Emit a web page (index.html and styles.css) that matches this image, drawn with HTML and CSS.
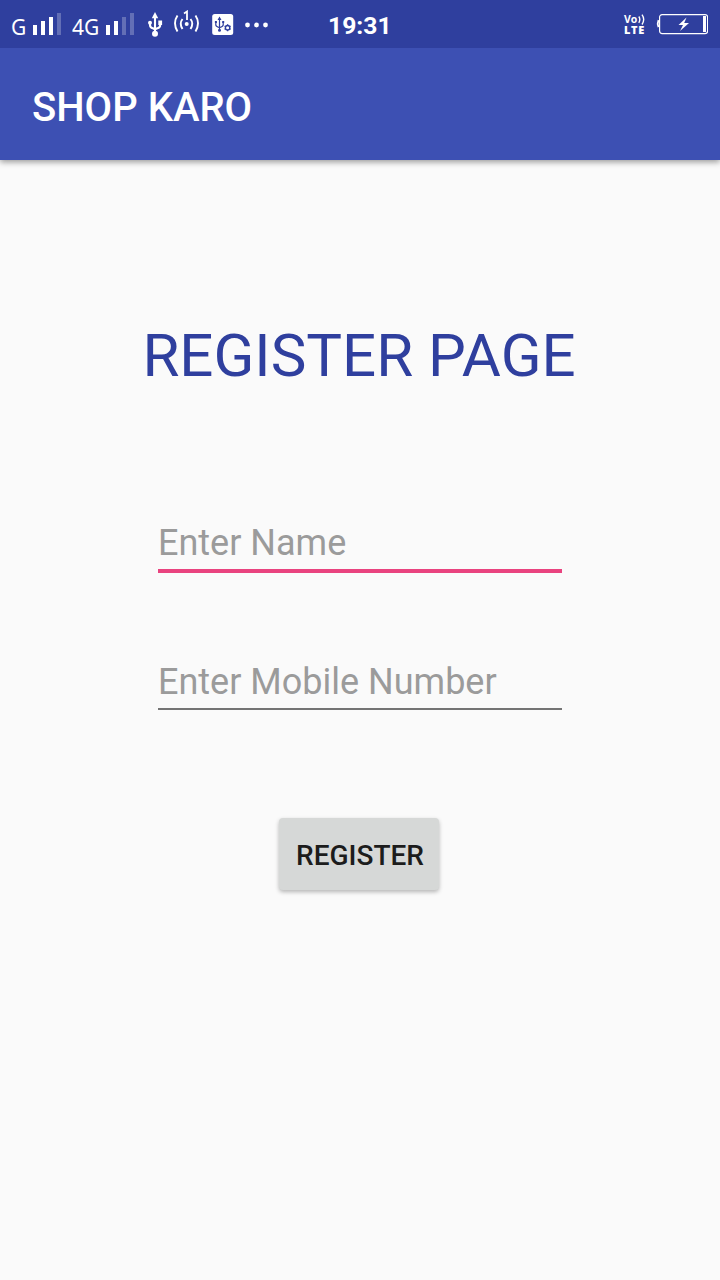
FILE: index.html
```html
<!DOCTYPE html>
<html lang="en">
<head>
<meta charset="utf-8">
<title>Shop Karo</title>
<link rel="stylesheet" href="styles.css">
</head>
<body>
<div class="status">
  <span class="net net-g">G</span>
  <svg class="signal" width="30" height="24" fill="#fff"><path d="M0 13h4v10H0zM8 9h4v14H8zM16 5h4v18h-4z"/><path opacity=".25" d="M24 1h4v22h-4z"/></svg>
  <span class="net net-4g">4G</span>
  <svg class="signal" width="30" height="24" fill="#fff"><path d="M0 13h4v10H0zM8 9h4v14H8z"/><path opacity=".25" d="M16 5h4v18h-4zM24 1h4v22h-4z"/></svg>
  <svg class="usb" width="16" height="26" fill="#fff"><path d="M7 0l3.200 6.200h-6.400z"/><circle cx="7" cy="21.700" r="3"/><circle cx="2" cy="10.800" r="2"/><path d="M10.300 8.500h3.800v4.500h-3.800z"/><path d="M7 5v16M2 10v3q0 2.600 2.800 3.200L7 17.300M12.200 11v2q0 2.600-2.800 3.200L7 17.300" fill="none" stroke="#fff" stroke-width="2.100"/></svg>
  <svg class="hotspot" width="28" height="24" fill="none" stroke="#fff" stroke-width="1.900"><path d="M4.500 5.500q-5 7.500 0 16M9.500 9q-3.500 4.500 0 10M22.500 5.500q5 7.500 0 16M17.500 9q3.500 4.500 0 10"/><path d="M11 3.500l3-2v8.500" stroke-width="1.800"/><circle cx="13.700" cy="14" r="2" fill="#fff" stroke="none"/></svg>
  <svg class="usb-settings" width="22" height="22"><rect width="21" height="21" x=".2" rx="2.500" fill="#fff"/><g fill="none" stroke="#2f3f9e" stroke-width="1.200"><path d="M7.500 4v13M3.800 8v3q0 1.500 3.700 2.700M11.200 8v3q0 1.500-3.700 2.700"/><circle cx="15.600" cy="13.700" r="2.200" stroke-width="1.400"/><path stroke-width="1.300" d="M15.600 10.200v1.200M15.600 16v1.200M12.600 12l1 .6M17.600 14.800l1 .6M12.600 15.400l1-.6M17.600 12.600l1-.6"/></g><path fill="#2f3f9e" d="M7.500 2.500l2 3.500h-4zM2.900 7h2v2h-2zM10.200 7h2v2h-2z"/><circle cx="7.500" cy="16.300" r="1.500" fill="#2f3f9e"/></svg>
  <svg class="more" width="24" height="6" fill="#fff"><circle cx="2.500" cy="3" r="2.400"/><circle cx="11.500" cy="3" r="2.400"/><circle cx="20.500" cy="3" r="2.400"/></svg>
  <span class="clock">19:31</span>
  <span class="volte"><span class="volte-top">Vo<svg width="8" height="11" fill="none" stroke="#fff" stroke-width="1.400"><path d="M.8 2.500q2 3 0 6.300M4 .7q3.400 4.800 0 9.800"/></svg></span><span class="volte-bottom">LTE</span></span>
  <svg class="battery" width="52" height="22" fill="none"><path d="M2.500 7.200q-1.500 3.500 0 7" stroke="#fff" stroke-width="1.800"/><rect x="3.600" y="1.600" width="48" height="19" rx="2.500" stroke="#fff" stroke-width="1.200"/><path fill="#fff" d="M47 3h3v16h-3zM30.500 4.500l-8 7.500h4.500L24 18l9-8h-4.800z"/></svg>
</div>
<header class="appbar">SHOP KARO</header>
<main class="page">
  <h1 class="title">REGISTER PAGE</h1>
  <form class="form">
    <input class="field field-active" type="text" placeholder="Enter Name">
    <input class="field" type="tel" placeholder="Enter Mobile Number">
    <button class="submit" type="button">REGISTER</button>
  </form>
</main>
</body>
</html>
```
FILE: styles.css
```css
* { box-sizing: border-box; }
body {
  margin: 0;
  min-height: 1280px;
  background: #fafafa;
  font-family: Roboto, sans-serif;
}
.status {
  position: relative;
  z-index: 1;
  display: flex;
  align-items: flex-start;
  height: 48px;
  background: #2f3f9e;
  color: #fff;
}
.status svg { display: block; flex: none; }
.net {
  flex: none;
  font: 21px/24px "Noto Sans", sans-serif;
  margin-top: 15px;
}
.net-g { width: 22px; margin-left: 11px; }
.net-4g { width: 34px; margin-left: 9px; }
.signal { margin-top: 12px; }
.status .usb { margin: 12px 0 0 12px; }
.status .hotspot { margin: 10px 0 0 9px; }
.status .usb-settings { margin: 14px 0 0 11px; }
.status .more { margin: 22px 0 0 11px; }
.clock {
  width: 66px;
  margin: 11px 0 0 59px;
  font-size: 24.700px;
  font-weight: 700;
  line-height: 30px;
}
.volte {
  display: flex;
  flex-direction: column;
  width: 24px;
  margin: 12px 0 0 230px;
  font: 700 11px/11px "Open Sans", sans-serif;
}
.volte-top {
  display: flex;
  height: 12px;
  line-height: 14px;
  font-size: 10.500px;
}
.volte-top svg { margin: 2px 0 0 0.5px; }
.volte-bottom {
  height: 12px;
  font-size: 11px;
  font-weight: 800;
  line-height: 12px;
  letter-spacing: 0.7px;
}
.status .battery { margin: 13px 0 0 8px; }
.appbar {
  height: 112px;
  padding: 6px 32px 0;
  background: #3d50b3;
  color: #fff;
  font-size: 40px;
  font-weight: 500;
  line-height: 107px;
  box-shadow: 0 2px 6px rgba(0, 0, 0, 0.4);
}
.page { padding-top: 156px; }
.title {
  margin: 0;
  padding-right: 2px;
  color: #2f3f9e;
  font-size: 60px;
  font-weight: 400;
  line-height: 80px;
  text-align: center;
}
.form {
  display: flex;
  flex-direction: column;
  align-items: center;
  padding-top: 125px;
}
.field {
  width: 404px;
  height: 50px;
  margin: 0;
  padding: 0 0 4px;
  border: 0;
  border-bottom: 2px solid #747474;
  background: none;
  font: 36px/44px Roboto, sans-serif;
}
.field::placeholder { color: #9b9b9b; opacity: 1; }
.field-active {
  height: 52px;
  margin-bottom: 87px;
  border-bottom: 4px solid #e9437f;
}
.submit {
  width: 160px;
  height: 72px;
  margin: 108px 2px 0 0;
  padding: 3px 0 0 2px;
  border: 0;
  border-radius: 4px;
  background: #d6d8d7;
  color: #1c1c1c;
  font: 500 28px/69px Roboto, sans-serif;
  box-shadow: 0 2px 4px rgba(0, 0, 0, 0.28);
}
```
